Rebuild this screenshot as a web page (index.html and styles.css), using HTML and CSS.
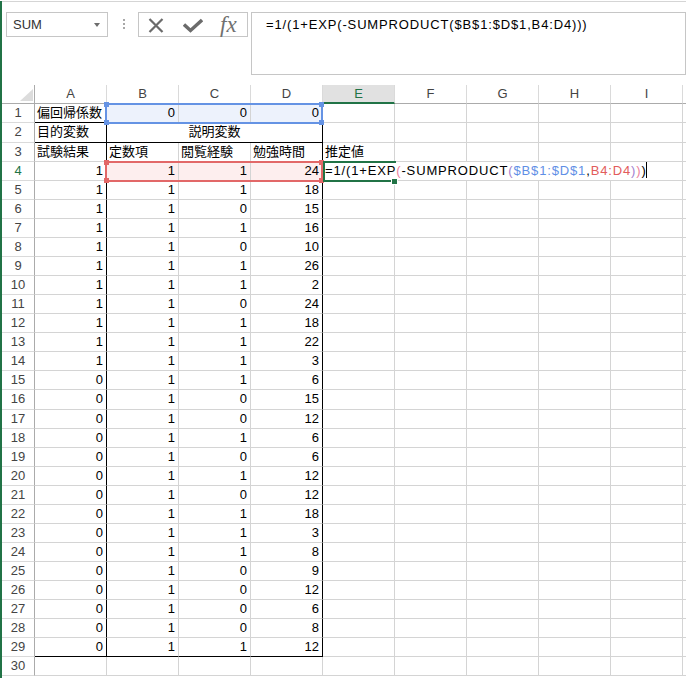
FILE: index.html
```html
<!DOCTYPE html>
<html lang="ja">
<head>
<meta charset="utf-8">
<title>Excel</title>
<link rel="stylesheet" href="styles.css">
</head>
<body>
<div class="app">
  <div class="topline"></div>
  <div class="fbar">
    <div class="namebox"><span>SUM</span><span class="caret"></span></div>
    <div class="dots"><i></i><i></i><i></i></div>
    <div class="fxbox">
      <svg class="ic-x" width="16" height="15" viewBox="0 0 16 15"><path d="M1.5 1 L14.5 14 M14.5 1 L1.5 14" stroke="#6b6b6b" stroke-width="2.2" fill="none"/></svg>
      <svg class="ic-ok" width="20" height="15" viewBox="0 0 20 15"><path d="M1 6.5 L7.5 12.5 L19 2" stroke="#6b6b6b" stroke-width="3.4" fill="none" stroke-linejoin="miter"/></svg>
      <span class="fx">fx</span>
    </div>
    <div class="formula">=1/(1+EXP(-SUMPRODUCT($B$1:$D$1,B4:D4)))</div>
  </div>

  <div class="sheet">
    <div class="corner"><svg width="13" height="12" viewBox="0 0 13 12"><polygon points="13,0 13,12 0,12" fill="#dcdcdc"/></svg></div>
    <div class="h">A</div><div class="h">B</div><div class="h">C</div><div class="h">D</div><div class="h hsel">E</div><div class="h">F</div><div class="h">G</div><div class="h">H</div><div class="h">I</div><div class="h"></div>

    <div class="rh">1</div><div class="c t bb">偏回帰係数</div><div class="c n bb blue">0</div><div class="c n bb blue">0</div><div class="c n bb br blue">0</div><div class="c"></div><div class="c"></div><div class="c"></div><div class="c"></div><div class="c"></div><div class="c"></div>
    <div class="rh">2</div><div class="c t bb br">目的変数</div><div class="c m bb br">説明変数</div><div class="c"></div><div class="c"></div><div class="c"></div><div class="c"></div><div class="c"></div><div class="c"></div>
    <div class="rh">3</div><div class="c t br">試験結果</div><div class="c t">定数項</div><div class="c t">閲覧経験</div><div class="c t br">勉強時間</div><div class="c t">推定値</div><div class="c"></div><div class="c"></div><div class="c"></div><div class="c"></div><div class="c"></div>
    <div class="rh cur">4</div><div class="c n br">1</div><div class="c n pink">1</div><div class="c n pink">1</div><div class="c n br pink">24</div><div class="c"></div><div class="c"></div><div class="c"></div><div class="c"></div><div class="c"></div><div class="c"></div>
    <div class="rh">5</div><div class="c n br">1</div><div class="c n">1</div><div class="c n">1</div><div class="c n br">18</div><div class="c"></div><div class="c"></div><div class="c"></div><div class="c"></div><div class="c"></div><div class="c"></div>
    <div class="rh">6</div><div class="c n br">1</div><div class="c n">1</div><div class="c n">0</div><div class="c n br">15</div><div class="c"></div><div class="c"></div><div class="c"></div><div class="c"></div><div class="c"></div><div class="c"></div>
    <div class="rh">7</div><div class="c n br">1</div><div class="c n">1</div><div class="c n">1</div><div class="c n br">16</div><div class="c"></div><div class="c"></div><div class="c"></div><div class="c"></div><div class="c"></div><div class="c"></div>
    <div class="rh">8</div><div class="c n br">1</div><div class="c n">1</div><div class="c n">0</div><div class="c n br">10</div><div class="c"></div><div class="c"></div><div class="c"></div><div class="c"></div><div class="c"></div><div class="c"></div>
    <div class="rh">9</div><div class="c n br">1</div><div class="c n">1</div><div class="c n">1</div><div class="c n br">26</div><div class="c"></div><div class="c"></div><div class="c"></div><div class="c"></div><div class="c"></div><div class="c"></div>
    <div class="rh">10</div><div class="c n br">1</div><div class="c n">1</div><div class="c n">1</div><div class="c n br">2</div><div class="c"></div><div class="c"></div><div class="c"></div><div class="c"></div><div class="c"></div><div class="c"></div>
    <div class="rh">11</div><div class="c n br">1</div><div class="c n">1</div><div class="c n">0</div><div class="c n br">24</div><div class="c"></div><div class="c"></div><div class="c"></div><div class="c"></div><div class="c"></div><div class="c"></div>
    <div class="rh">12</div><div class="c n br">1</div><div class="c n">1</div><div class="c n">1</div><div class="c n br">18</div><div class="c"></div><div class="c"></div><div class="c"></div><div class="c"></div><div class="c"></div><div class="c"></div>
    <div class="rh">13</div><div class="c n br">1</div><div class="c n">1</div><div class="c n">1</div><div class="c n br">22</div><div class="c"></div><div class="c"></div><div class="c"></div><div class="c"></div><div class="c"></div><div class="c"></div>
    <div class="rh">14</div><div class="c n br">1</div><div class="c n">1</div><div class="c n">1</div><div class="c n br">3</div><div class="c"></div><div class="c"></div><div class="c"></div><div class="c"></div><div class="c"></div><div class="c"></div>
    <div class="rh">15</div><div class="c n br">0</div><div class="c n">1</div><div class="c n">1</div><div class="c n br">6</div><div class="c"></div><div class="c"></div><div class="c"></div><div class="c"></div><div class="c"></div><div class="c"></div>
    <div class="rh">16</div><div class="c n br">0</div><div class="c n">1</div><div class="c n">0</div><div class="c n br">15</div><div class="c"></div><div class="c"></div><div class="c"></div><div class="c"></div><div class="c"></div><div class="c"></div>
    <div class="rh">17</div><div class="c n br">0</div><div class="c n">1</div><div class="c n">0</div><div class="c n br">12</div><div class="c"></div><div class="c"></div><div class="c"></div><div class="c"></div><div class="c"></div><div class="c"></div>
    <div class="rh">18</div><div class="c n br">0</div><div class="c n">1</div><div class="c n">1</div><div class="c n br">6</div><div class="c"></div><div class="c"></div><div class="c"></div><div class="c"></div><div class="c"></div><div class="c"></div>
    <div class="rh">19</div><div class="c n br">0</div><div class="c n">1</div><div class="c n">0</div><div class="c n br">6</div><div class="c"></div><div class="c"></div><div class="c"></div><div class="c"></div><div class="c"></div><div class="c"></div>
    <div class="rh">20</div><div class="c n br">0</div><div class="c n">1</div><div class="c n">1</div><div class="c n br">12</div><div class="c"></div><div class="c"></div><div class="c"></div><div class="c"></div><div class="c"></div><div class="c"></div>
    <div class="rh">21</div><div class="c n br">0</div><div class="c n">1</div><div class="c n">0</div><div class="c n br">12</div><div class="c"></div><div class="c"></div><div class="c"></div><div class="c"></div><div class="c"></div><div class="c"></div>
    <div class="rh">22</div><div class="c n br">0</div><div class="c n">1</div><div class="c n">1</div><div class="c n br">18</div><div class="c"></div><div class="c"></div><div class="c"></div><div class="c"></div><div class="c"></div><div class="c"></div>
    <div class="rh">23</div><div class="c n br">0</div><div class="c n">1</div><div class="c n">1</div><div class="c n br">3</div><div class="c"></div><div class="c"></div><div class="c"></div><div class="c"></div><div class="c"></div><div class="c"></div>
    <div class="rh">24</div><div class="c n br">0</div><div class="c n">1</div><div class="c n">1</div><div class="c n br">8</div><div class="c"></div><div class="c"></div><div class="c"></div><div class="c"></div><div class="c"></div><div class="c"></div>
    <div class="rh">25</div><div class="c n br">0</div><div class="c n">1</div><div class="c n">0</div><div class="c n br">9</div><div class="c"></div><div class="c"></div><div class="c"></div><div class="c"></div><div class="c"></div><div class="c"></div>
    <div class="rh">26</div><div class="c n br">0</div><div class="c n">1</div><div class="c n">0</div><div class="c n br">12</div><div class="c"></div><div class="c"></div><div class="c"></div><div class="c"></div><div class="c"></div><div class="c"></div>
    <div class="rh">27</div><div class="c n br">0</div><div class="c n">1</div><div class="c n">0</div><div class="c n br">6</div><div class="c"></div><div class="c"></div><div class="c"></div><div class="c"></div><div class="c"></div><div class="c"></div>
    <div class="rh">28</div><div class="c n br">0</div><div class="c n">1</div><div class="c n">0</div><div class="c n br">8</div><div class="c"></div><div class="c"></div><div class="c"></div><div class="c"></div><div class="c"></div><div class="c"></div>
    <div class="rh">29</div><div class="c n br bb">0</div><div class="c n bb">1</div><div class="c n bb">1</div><div class="c n br bb">12</div><div class="c"></div><div class="c"></div><div class="c"></div><div class="c"></div><div class="c"></div><div class="c"></div>
    <div class="rh">30</div><div class="c"></div><div class="c"></div><div class="c"></div><div class="c"></div><div class="c"></div><div class="c"></div><div class="c"></div><div class="c"></div><div class="c"></div><div class="c"></div>

    <div class="hl hl-blue"><i class="k tl"></i><i class="k tr"></i><i class="k bl"></i><i class="k br2"></i></div>
    <div class="hl hl-red"><i class="k tl"></i><i class="k tr"></i><i class="k bl"></i><i class="k br2"></i></div>
    <div class="editor">=1/(1+EXP<span class="p2">(</span>-SUMPRODUCT<span class="p3">(</span><span class="rb">$B$1:$D$1</span>,<span class="rr">B4:D4</span><span class="p3">)</span><span class="p2">)</span>)<span class="caretline"></span></div>
    <div class="active"></div>
    <div class="handle"></div>
  </div>
</div>
</body>
</html>
```

FILE: styles.css
```css
* { box-sizing: border-box; margin: 0; padding: 0; }
html, body { background: #fff; }
body {
  font-family: "Liberation Sans", "Noto Sans CJK JP", sans-serif;
  font-size: 13px;
  color: #000;
  overflow: hidden;
}
.app {
  border-left: 2px solid #217346;
  height: 678px;
}
.topline { height: 1px; margin-top: 1px; background: #d5d5d5; }

.fbar { display: flex; align-items: flex-start; margin-top: 10px; }
.namebox {
  margin-left: 4px; width: 102px; height: 25px;
  border: 1px solid #c6c6c6;
  display: flex; align-items: center;
  padding: 0 7px 0 6px; color: #333;
}
.caret {
  margin-left: auto; width: 0; height: 0;
  border-left: 3px solid transparent; border-right: 3px solid transparent;
  border-top: 4px solid #6d6d6d;
}
.dots { margin-left: 15px; margin-top: 7px; display: flex; flex-direction: column; gap: 2px; }
.dots i { display: block; width: 2px; height: 2px; background: #a8a8a8; }
.fxbox {
  margin-left: 13px; width: 110px; height: 25px;
  border: 1px solid #c6c6c6;
  display: flex; align-items: center; padding-left: 9px;
}
.ic-x { margin-top: 1px; }
.ic-ok { margin-left: 19px; margin-top: 2px; }
.fx {
  margin-left: 17px;
  font-family: "Liberation Serif", serif; font-style: italic;
  font-size: 23px; color: #707070; line-height: 20px;
}
.formula {
  margin-left: 3px; width: 435px; height: 63px;
  border: 1px solid #c6c6c6;
  padding: 4px 0 0 14px;
  letter-spacing: 0.85px; line-height: 16px;
}

.sheet {
  position: relative;
  margin-top: 10px;
  display: grid;
  grid-template-columns: 33px repeat(9, 72px) 1fr;
  grid-template-rows: 19px 19px 20px repeat(13, 19px) 20px repeat(14, 19px);
}
.corner {
  border-right: 1px solid #ababab; border-bottom: 1px solid #ababab;
  display: flex; align-items: flex-end; justify-content: flex-end;
  padding: 0 1px 2px 0;
}
.h {
  border-right: 1px solid #dadada; border-bottom: 1px solid #ababab;
  text-align: center; line-height: 18px; color: #444;
}
.hsel { background: #e1e1e1; color: #217346; border-bottom: 2px solid #217346; }
.rh {
  border-right: 1px solid #ababab; border-bottom: 1px solid #dadada;
  text-align: center; line-height: 18px; color: #444;
}
.rh.cur { color: #217346; }
.c {
  border-right: 1px solid #d4d4d4; border-bottom: 1px solid #d4d4d4;
  line-height: 18px; padding: 0 2px; white-space: nowrap; overflow: hidden;
}
.n { text-align: right; padding-right: 3px; }
.t { text-align: left; }
.m { grid-column: span 3; text-align: center; }
.bb { border-bottom-color: #000; }
.br { border-right-color: #000; }
.blue { background: #edf2fc; }
.pink { background: #fdeeee; }

.hl { position: absolute; width: 218px; height: 21px; border: 2px solid; }
.hl-blue { left: 103px; top: 18px; border-color: #6593e4; }
.hl-red { left: 103px; top: 76px; border-color: #e26868; }
.k { position: absolute; width: 5px; height: 5px; }
.hl-blue .k { background: #6593e4; }
.hl-red .k { background: #e26868; }
.k.tl { left: -3px; top: -3px; }
.k.tr { right: -3px; top: -3px; }
.k.bl { left: -3px; bottom: -3px; }
.k.br2 { right: -3px; bottom: -3px; }

.editor {
  position: absolute; left: 322px; top: 77px; width: 328px; height: 18px;
  background: #fff; padding-left: 1px;
  line-height: 18px; letter-spacing: 0.85px; white-space: nowrap;
}
.p2 { color: #ec7f9c; }
.p3 { color: #9f7fd0; }
.rb { color: #5f8fe6; }
.rr { color: #e25c5c; }
.caretline {
  display: inline-block; width: 1px; height: 16px; background: #000;
  vertical-align: -3px; margin-left: -1px;
}
.active {
  position: absolute; left: 321px; top: 76px; width: 73px; height: 21px;
  border: 2px solid #217346; border-right: 0;
}
.handle {
  position: absolute; left: 389px; top: 93px; width: 7px; height: 7px;
  background: #217346; border: 1px solid #fff;
}
```
